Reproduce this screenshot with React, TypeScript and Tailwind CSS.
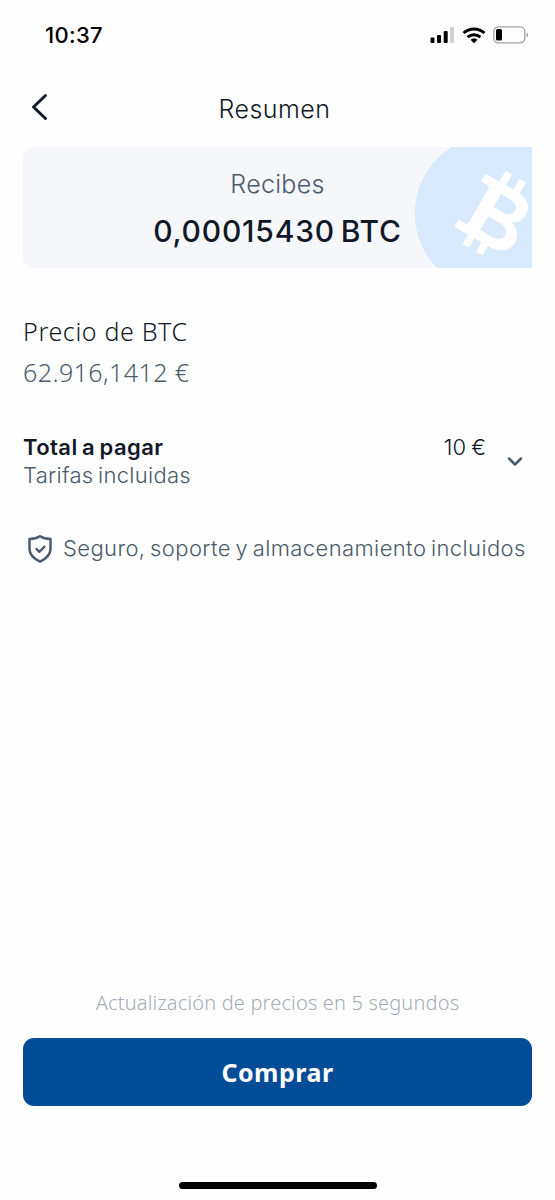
import type { ReactNode } from 'react'

export default function App() {
  return (
    <main className="flex h-[1200px] w-[555px] flex-col overflow-hidden bg-[#fefefe] font-['Inter',sans-serif] text-[#111827]">
      <StatusBar />

      <header className="grid h-[77px] grid-cols-[77px_1fr_83px] items-center">
        <button className="mb-1 ml-[30px] flex w-5 items-center" aria-label="Volver">
          <svg width="20" height="30" viewBox="0 0 20 30" fill="none">
            <path d="M15.5 3.5 3.5 15l12 11.5" stroke="#111827" strokeWidth="3" strokeLinecap="round" strokeLinejoin="round" />
          </svg>
        </button>
        <h1 className="text-center text-[25px] leading-8 font-light tracking-[0.45px]">
          Resumen
        </h1>
      </header>

      <section className="relative mx-[23px] flex h-[121px] flex-col items-center overflow-hidden rounded-l-[10px] bg-[#f6f7fa] pt-[19px]">
        <p className="text-[25px] leading-9 font-light tracking-[0.3px] text-[#4b5b6b]">Recibes</p>
        <p className="mt-[11px] text-[30px] leading-9 font-[550] tracking-[0.8px] whitespace-nowrap [word-spacing:-3px]">
          0,00015430 BTC
        </p>
        <BitcoinMark />
      </section>

      <section className="mt-[45px] ml-[23px] font-['Noto_Sans',sans-serif]">
        <h2 className="text-[25px] leading-9 font-light tracking-[0.65px] whitespace-nowrap">
          Precio de BTC
        </h2>
        <p className="mt-[5px] text-[25px] leading-9 font-light tracking-[0.42px] whitespace-nowrap text-[#4b5b6b]">
          62.916,1412 €
        </p>
      </section>

      <section className="mt-[43px] mr-[31px] ml-[23px] flex h-[60px] items-start">
        <div className="flex-1">
          <Line className="text-[22px] font-semibold tracking-[0.42px] [word-spacing:-1.5px]">Total a pagar</Line>
          <Line className="text-[22px] font-light tracking-[0.3px] [word-spacing:-2px] text-[#4b5b6b]">Tarifas incluidas</Line>
        </div>
        <Line className="text-[22px] font-light [word-spacing:-1px]">10 €</Line>
        <svg className="mt-[22px] ml-[20px]" width="18" height="14" viewBox="0 0 18 14" fill="none">
          <path d="m3 3.5 6 6 6-6" stroke="#4b5b6b" strokeWidth="2.5" strokeLinecap="round" strokeLinejoin="round" />
        </svg>
      </section>

      <section className="mt-[40px] ml-[27px] flex h-7 items-center text-[#4b5b6b]">
        <svg className="mt-[3px]" width="26" height="30" viewBox="0 0 26 30" fill="none" stroke="currentColor">
          <path d="M13 2.3C9.7 4.5 6.3 5 2.5 5v10c0 6.2 4.5 9.7 10.5 12.7C19 24.7 23.5 21.2 23.5 15V5C19.7 5 16.3 4.5 13 2.3Z" strokeWidth="2.5" strokeLinejoin="round" />
          <path d="m9.5 15 2.8 2.8 5-5" strokeWidth="2.4" strokeLinecap="round" strokeLinejoin="round" />
        </svg>
        <p className="mt-[2px] ml-[10px] text-[22px] leading-7 font-light tracking-[0.4px] whitespace-nowrap [word-spacing:-2px]">
          Seguro, soporte y almacenamiento incluidos
        </p>
      </section>

      <footer className="mt-auto flex flex-col items-center font-['Noto_Sans',sans-serif]">
        <p className="text-[20px] leading-7 font-light tracking-[0.17px] whitespace-nowrap text-[#a3adb5]">
          Actualización de precios en 5 segundos
        </p>
        <button className="mt-[21px] h-[68px] w-[509px] rounded-[11px] bg-[#034d98] pt-px text-[25px] font-bold tracking-[0.5px] text-white">
          Comprar
        </button>
        <div className="mt-[76px] mb-[11px] h-[7px] w-[198px] rounded-full bg-black" />
      </footer>
    </main>
  )
}

function Line({ className, children }: { className: string; children: ReactNode }) {
  return <p className={`leading-7 whitespace-nowrap ${className}`}>{children}</p>
}

function StatusBar() {
  return (
    <div className="flex h-[70px] items-center justify-between pr-[26px] pl-[45px] text-black">
      <span className="text-[22px] leading-7 font-medium tracking-[0.3px]">10:37</span>
      <div className="flex items-center">
        <svg width="24" height="18" viewBox="0 0 24 18">
          <rect x="0.5" y="11.5" width="4" height="5.5" rx="1" />
          <rect x="7" y="9" width="4" height="8" rx="1" />
          <rect x="13.7" y="5" width="4" height="12" rx="1" />
          <rect x="20" y="1" width="4" height="16" rx="1" fill="#d0d0d0" />
        </svg>
        <svg className="ml-2" width="24" height="18" viewBox="0 0 24 18" fill="none" stroke="black" strokeWidth="3">
          <path d="M1.6 7a15.2 15.2 0 0 1 20.8 0" />
          <path d="M5.6 11.2a9.4 9.4 0 0 1 12.8 0" />
          <path d="M8.5 13.8a5.3 5.3 0 0 1 7 0L12 17.3Z" fill="black" stroke="none" />
        </svg>
        <svg className="ml-[7px]" width="36" height="18" viewBox="0 0 36 18">
          <rect x="0.8" y="0.8" width="31" height="16" rx="4.5" fill="none" stroke="#a0a0a0" strokeWidth="1.3" />
          <rect x="3" y="3" width="6" height="11.5" rx="1.5" />
          <path d="M33.7 6.5c2 .8 2 4 0 4.8Z" fill="#a0a0a0" />
        </svg>
      </div>
    </div>
  )
}

// Tilted coin logo, cut off by the right edge of the card
function BitcoinMark() {
  return (
    <svg className="absolute top-0 right-0" width="118" height="121" viewBox="0 0 118 121">
      <circle cx="78.5" cy="66.5" r="77.7" fill="#d8eafc" />
      <g transform="translate(79.3 66.3) rotate(30)" fill="white">
        <path d="M-10.5-43h7.5v14h-7.5zM5.5-43h7.5v14h-7.5zM-11.5 29h7.5v13h-7.5zM4 29h7.5v13H4z" />
        <path
          fillRule="evenodd"
          d="M-26.5-30.5H9C21-30.5 29-25 29-15.5 29-8.5 26-4 20.5-1.5 29 1 33.5 7 33.5 14 33.5 25 25 31 11 31H-27v-8.5h6.5c3 0 4-1 4-4v-36.5c0-2.5-1-3.5-3.5-3.5h-6.5ZM-3-20.5v15H6c8 0 11.5-2.5 11.5-7.5S14-20.5 6-20.5ZM-3 5v16H8c9 0 13.5-2.5 13.5-8S17 5 8 5Z"
        />
      </g>
    </svg>
  )
}
